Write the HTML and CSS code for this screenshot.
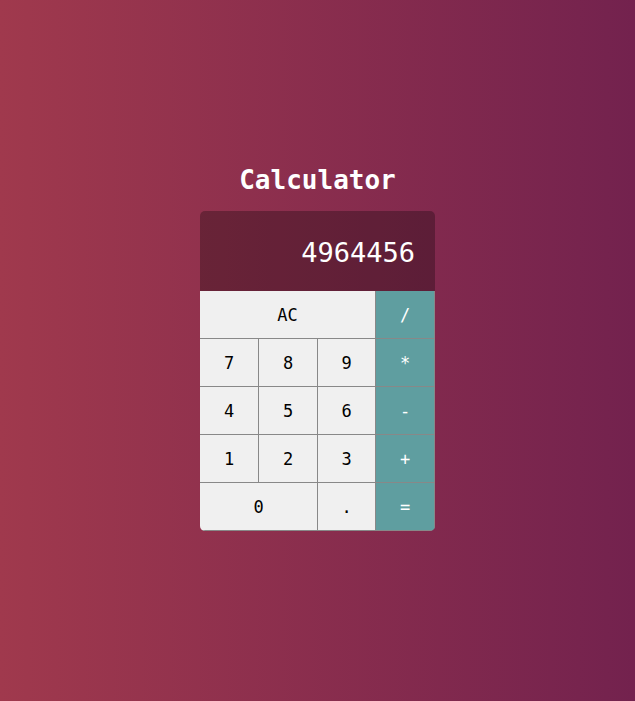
FILE: index.html
```html
<!DOCTYPE html>
<html lang="en">
<head>
<meta charset="utf-8">
<title>Calculator</title>
<link rel="stylesheet" href="styles.css">
</head>
<body>
<main class="app">
  <h1 class="title">Calculator</h1>
  <div class="calc">
    <div class="display">4964456</div>
    <div class="keys">
      <button class="key span3">AC</button>
      <button class="key op">/</button>
      <button class="key">7</button>
      <button class="key">8</button>
      <button class="key">9</button>
      <button class="key op">*</button>
      <button class="key">4</button>
      <button class="key">5</button>
      <button class="key">6</button>
      <button class="key op">-</button>
      <button class="key">1</button>
      <button class="key">2</button>
      <button class="key">3</button>
      <button class="key op">+</button>
      <button class="key span2">0</button>
      <button class="key">.</button>
      <button class="key op">=</button>
    </div>
  </div>
</main>
</body>
</html>
```
FILE: styles.css
```css
html, body {
  margin: 0;
  padding: 0;
  height: 100%;
}
body {
  background: linear-gradient(to right, #a0394d, #73224e);
  font-family: "DejaVu Sans Mono", monospace;
}
.app {
  min-height: 100vh;
  box-sizing: border-box;
  padding-bottom: 6px;
  display: flex;
  flex-direction: column;
  align-items: center;
  justify-content: center;
}
.title {
  margin: 0 0 16px;
  font-size: 26px;
  line-height: 30px;
  font-weight: bold;
  color: #ffffff;
}
.calc {
  width: 235px;
  border-radius: 5px;
  overflow: hidden;
}
.display {
  height: 80px;
  box-sizing: border-box;
  padding: 3px 20px 0;
  display: flex;
  align-items: center;
  justify-content: flex-end;
  background: rgba(0, 0, 0, 0.28);
  color: #ffffff;
  font-size: 27px;
}
.keys {
  display: grid;
  grid-template-columns: 59px 59px 58px 59px;
  grid-auto-rows: 48px;
}
.key {
  margin: 0;
  padding: 2px 0 0;
  border: 0;
  border-right: 1px solid #888;
  border-bottom: 1px solid #888;
  border-radius: 0;
  background: #f0f0f0;
  color: #000;
  font-family: "DejaVu Sans Mono", monospace;
  font-size: 17px;
}
.op {
  background: #5f9ea0;
  color: #ffffff;
}
.span3 { grid-column: span 3; }
.span2 { grid-column: span 2; }
```
